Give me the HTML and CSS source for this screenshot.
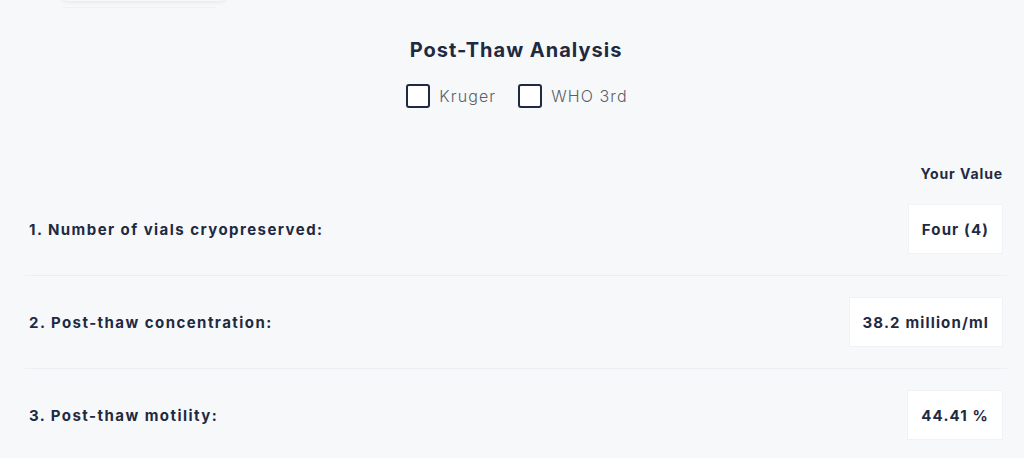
FILE: index.html
```html
<!DOCTYPE html>
<html>
<head>
<meta charset="utf-8">
<link rel="stylesheet" href="styles.css">
</head>
<body>
<div class="prev-card"></div>
<div class="prev-line"></div>
<main class="panel">
  <h2 class="title">Post-Thaw Analysis</h2>
  <div class="options">
    <label class="opt"><span class="box"></span><span class="opt-text">Kruger</span></label>
    <label class="opt"><span class="box"></span><span class="opt-text">WHO 3rd</span></label>
  </div>
  <div class="table">
    <div class="head">Your Value</div>
    <div class="row">
      <div class="label">1. Number of vials cryopreserved:</div>
      <div class="value">Four (4)</div>
    </div>
    <div class="row">
      <div class="label">2. Post-thaw concentration:</div>
      <div class="value">38.2 million/ml</div>
    </div>
    <div class="row">
      <div class="label">3. Post-thaw motility:</div>
      <div class="value">44.41 %</div>
    </div>
  </div>
</main>
</body>
</html>
```
FILE: styles.css
```css
html, body {
  margin: 0;
  padding: 0;
  background: #f7f8fa;
  height: 100%;
  overflow: hidden;
}
body {
  font-family: Inter, "Noto Sans", sans-serif;
  color: #1e2a42;
}
.prev-card {
  width: 168px;
  height: 30px;
  margin: -29px 0 0 60px;
  background: #f7f8fa;
  border-radius: 0 0 8px 8px;
  box-shadow: 0 1px 4px rgba(0,0,0,0.08);
}
.prev-line {
  width: 153px;
  height: 1px;
  margin: 6px 0 0 63px;
  background: #eff0f3;
}
.panel {
  padding: 0 17px 0 25px;
}
.title {
  margin: 28px 0 0;
  text-align: center;
  font-size: 20px;
  line-height: 28px;
  font-weight: 700;
  letter-spacing: 1px;
  color: #1e2a42;
}
.options {
  display: flex;
  justify-content: center;
  gap: 22px;
  margin-top: 20px;
  height: 24px;
  padding-left: 2px;
}
.opt {
  display: flex;
  align-items: center;
  gap: 9px;
}
.box {
  box-sizing: border-box;
  width: 24px;
  height: 24px;
  border: 2.5px solid #1e2a42;
  border-radius: 3px;
  background: #fff;
}
.opt-text {
  font-size: 16px;
  font-weight: 300;
  letter-spacing: 1.1px;
  color: #5a5f69;
}
.table {
  margin-top: 57px;
}
.head {
  text-align: right;
  font-size: 14px;
  font-weight: 700;
  line-height: 18px;
  letter-spacing: 0.9px;
  padding-right: 4px;
}
.row {
  display: flex;
  align-items: center;
  justify-content: space-between;
  height: 92px;
  border-bottom: 1px solid #eceef2;
  padding: 0 4px;
}
.label {
  font-size: 15px;
  font-weight: 700;
  letter-spacing: 1.45px;
}
.value {
  box-sizing: border-box;
  height: 50px;
  display: flex;
  align-items: center;
  padding: 0 13px;
  background: #fff;
  border: 1px solid #f1f2f5;
  font-size: 15px;
  font-weight: 700;
  letter-spacing: 1.15px;
}
```
